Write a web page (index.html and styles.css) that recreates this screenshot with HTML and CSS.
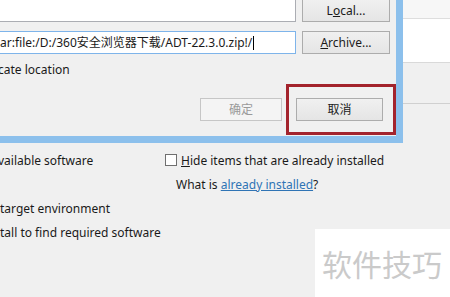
FILE: index.html
```html
<!DOCTYPE html>
<html lang="zh-CN">
<head>
  <meta charset="UTF-8"/>
  <title>Install - Add Repository</title>
  <link rel="stylesheet" href="styles.css">
</head>
<body>

  <div class="screen">

    <!-- parent window (behind the dialog) -->
    <div class="parent">
      <div class="behind">
        <div class="behind-top"></div>
        <div class="behind-panel"></div>
        <div class="behind-rule"></div>
      </div>

      <div class="options">
        <div class="opt cut">vailable software</div>
        <div class="opt">
          <label class="check"><span class="box"></span><span><u>H</u>ide items that are already installed</span></label>
        </div>
        <div class="opt"></div>
        <div class="opt what"><span>What is <a href="#">already installed</a>?</span></div>
        <div class="opt">target environment</div>
        <div class="opt"></div>
        <div class="opt">tall to find required software</div>
        <div class="opt"></div>
      </div>
    </div>

    <!-- Add Repository dialog -->
    <div class="dialog">
      <div class="path-row first">
        <div class="field"></div>
        <div class="btn">L<u>o</u>cal...</div>
      </div>
      <div class="path-row">
        <div class="field focused">jar:file:/D:/360安全浏览器下载/ADT-22.3.0.zip!/<span class="caret"></span></div>
        <div class="btn"><u>A</u>rchive...</div>
      </div>
      <div class="note">cate location</div>
      <div class="actions">
        <div class="btn ok disabled">确定</div>
        <div class="btn cancel">取消</div>
      </div>
      <div class="highlight"></div>
    </div>

    <div class="watermark">软件技巧</div>
  </div>

</body>
</html>
```

FILE: styles.css
```css
html, body {
  margin: 0;
  padding: 0;
  background-color: #f0f0f0;
  font-family: "Noto Sans", "Noto Sans CJK SC", sans-serif;
  font-size: 12px;
  color: #1a1a1a;
}

.screen {
  position: relative;
  width: 450px;
  height: 297px;
  overflow: hidden;
}

/* parent window */
.behind {
  height: 143px;
}

.behind-top {
  height: 18px;
  background-color: #f7f7f7;
  border-bottom: 1px solid #dedede;
}

.behind-panel {
  height: 43px;
  background-color: #fff;
  border-bottom: 1px solid #d9d9d9;
}

.behind-rule {
  margin-top: 40px;
  height: 1px;
  background-color: #d0d0d0;
}

.options {
  display: grid;
  grid-template-columns: 165px 1fr;
  grid-auto-rows: 24px;
  padding-top: 5px;
}

.opt {
  display: flex;
  align-items: center;
  white-space: nowrap;
}

.opt.cut {
  margin-left: -2px;
}

.opt.what {
  padding-left: 11px;
}

.opt a {
  color: #2f74b5;
  text-decoration: underline;
}

.check {
  display: flex;
  align-items: center;
  gap: 4px;
}

.check .box {
  width: 10px;
  height: 10px;
  border: 1px solid #6f6f6f;
  background-color: #fff;
}

/* dialog */
.dialog {
  position: absolute;
  left: 0;
  top: 0;
  width: 403px;
  height: 143px;
  box-sizing: border-box;
  padding-right: 6px;
  background-color: #f0f0f0;
  border-right: 7px solid #8cc0ec;
  border-bottom: 7px solid #8cc0ec;
  overflow: hidden;
}

.path-row {
  display: flex;
  gap: 6px;
  height: 23px;
  margin-top: 9px;
}

.path-row.first {
  margin-top: -1px;
}

.field {
  flex: 1;
  margin-left: -30px;
  padding-left: 26px;
  background-color: #fff;
  border: 1px solid #abadb3;
  line-height: 21px;
  white-space: nowrap;
  overflow: hidden;
}

.field.focused {
  border-color: #7eb4ea;
}

.caret {
  display: inline-block;
  width: 1px;
  height: 14px;
  margin-left: 1px;
  background-color: #000;
  vertical-align: -3px;
}

.btn {
  width: 88px;
  box-sizing: border-box;
  border: 1px solid #acacac;
  background: linear-gradient(#f0f0f0, #e5e5e5);
  text-align: center;
  line-height: 21px;
  height: 23px;
}

.note {
  margin-top: 8px;
  margin-left: -2px;
  line-height: 16px;
}

.actions {
  display: flex;
  justify-content: flex-end;
  gap: 14px;
  margin-top: 20px;
  padding-right: 7px;
}

.btn.ok {
  width: 82px;
}

.btn.cancel {
  width: 87px;
}

.btn.disabled {
  border-color: #c6c6c6;
  background: #f4f4f4;
  color: #9a9a9a;
}

.highlight {
  position: absolute;
  left: 286px;
  top: 84px;
  width: 110px;
  height: 51px;
  box-sizing: border-box;
  border: 3px solid #a3232c;
}

/* watermark */
.watermark {
  position: absolute;
  right: 0;
  bottom: 0;
  width: 135px;
  height: 68px;
  box-sizing: border-box;
  padding-left: 7px;
  background-color: #fff;
  color: #cacaca;
  font-family: "Noto Sans CJK SC", sans-serif;
  font-size: 30px;
  line-height: 68px;
}
```
